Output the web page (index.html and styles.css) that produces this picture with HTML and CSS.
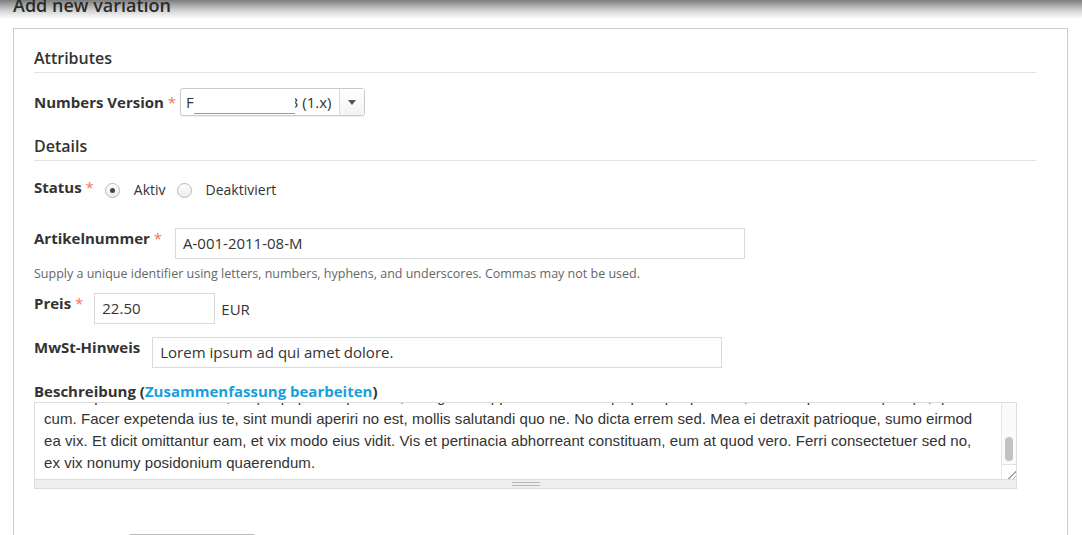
FILE: index.html
```html
<!DOCTYPE html>
<html lang="de">
<head>
    <meta charset="UTF-8">
    <title>Add new variation</title>
    <link rel="stylesheet" href="styles.css">
</head>
<body>
    <div class="page-title">
        <h1>Add new variation</h1>
    </div>

    <div class="panel">
        <h2 class="section-title">Attributes</h2>
        <div class="form-item form-item--center">
            <label class="form-label">Numbers Version <span class="req">*</span></label>
            <div class="select select--version">
                <span class="select-value">F<span class="redact"></span>3 (1.x)</span>
                <span class="select-arrow"></span>
            </div>
        </div>

        <h2 class="section-title section-title--details">Details</h2>
        <div class="form-item form-item--status">
            <label class="form-label">Status <span class="req">*</span></label>
            <div class="radios">
                <span class="radio radio--checked"></span>
                <span class="radio-label">Aktiv</span>
                <span class="radio"></span>
                <span class="radio-label">Deaktiviert</span>
            </div>
        </div>

        <div class="form-item form-item--sku">
            <label class="form-label">Artikelnummer <span class="req">*</span></label>
            <div class="text-input text-input--wide sku-input">A-001-2011-08-M</div>
        </div>
        <div class="description">Supply a unique identifier using letters, numbers, hyphens, and underscores. Commas may not be used.</div>

        <div class="form-item form-item--price">
            <label class="form-label">Preis <span class="req">*</span></label>
            <div class="price-field">
                <div class="text-input text-input--price">22.50</div>
                <span class="currency">EUR</span>
            </div>
        </div>

        <div class="form-item form-item--vat">
            <label class="form-label">MwSt-Hinweis</label>
            <div class="text-input text-input--wide vat-input">Lorem ipsum ad qui amet dolore.</div>
        </div>

        <div class="form-item--body">
            <label class="form-label">Beschreibung (<a href="#" class="summary-link">Zusammenfassung bearbeiten</a>)</label>
            <div class="textarea">
                <div class="textarea-text">
                    <div class="textarea-scroll">
                        Lorem ipsum dolor sit amet, ut quo populo sapientem, sea graeci appetere ei. Pri at qui prompta pertinax, ne sea quando tempor qui, quo<br>
                        cum. Facer expetenda ius te, sint mundi aperiri no est, mollis salutandi quo ne. No dicta errem sed. Mea ei detraxit patrioque, sumo eirmod<br>
                        ea vix. Et dicit omittantur eam, et vix modo eius vidit. Vis et pertinacia abhorreant constituam, eum at quod vero. Ferri consectetuer sed no,<br>
                        ex vix nonumy posidonium quaerendum.
                    </div>
                </div>
                <div class="scrollbar">
                    <div class="scrollbar-track"><span class="scrollbar-thumb"></span></div>
                    <div class="resizer"></div>
                </div>
            </div>
            <div class="grippie"><span></span></div>
        </div>

        <div class="form-actions">
            <span class="button">Speichern</span>
        </div>
    </div>
</body>
</html>
```

FILE: styles.css
```css
html,
body {
    margin: 0;
    padding: 0;
    height: 535px;
    overflow: hidden;
    background-color: #ffffff;
}

body {
    font-family: 'Open Sans', 'DejaVu Sans', sans-serif;
    color: #333333;
}

.page-title {
    display: flow-root;
    height: 28px;
    background: linear-gradient(to bottom, #7c7c7c 0, #cfcfcf 10px, #fbfbfb 18px, #ffffff 19px);
}

.page-title h1 {
    margin: -5px 0 0 13px;
    font-size: 18px;
    line-height: 20px;
    font-weight: 600;
    color: #2b2b2b;
}

.panel {
    margin: 0 14px 0 13px;
    padding: 19px 31px 0 20px;
    border: 1px solid #cccccc;
    border-bottom: none;
    min-height: 600px;
}

.section-title {
    margin: 0;
    font-size: 16px;
    line-height: 20px;
    font-weight: 600;
    padding-bottom: 4px;
    border-bottom: 1px solid #e2e2e2;
}

.section-title--details {
    margin-top: 20px;
}

.form-item {
    display: flex;
    align-items: flex-start;
}

.form-item--center {
    align-items: center;
    margin-top: 15px;
}

.form-label {
    font-size: 15px;
    line-height: 20px;
    font-weight: 700;
    white-space: nowrap;
}

.req {
    color: #ef7a55;
    font-weight: 400;
}

/* select */
.select {
    display: flex;
    align-items: stretch;
    height: 26px;
    border: 1px solid #c9c9c9;
    border-radius: 3px;
    background-color: #ffffff;
    box-shadow: 0 1px 1px rgba(0, 0, 0, 0.06);
}

.select--version {
    margin-left: 4px;
    width: 183px;
}

.select-value {
    flex: 1;
    padding-left: 5px;
    font-size: 15px;
    line-height: 26px;
    white-space: nowrap;
    overflow: hidden;
}

.redact {
    display: inline-block;
    position: relative;
    width: 101px;
    height: 22px;
    margin-right: -5px;
    vertical-align: -6px;
    background-color: #ffffff;
    border-bottom: 1px solid #9a9a9a;
}

.select-arrow {
    width: 24px;
    border-left: 1px solid #dcdcdc;
    background: linear-gradient(to bottom, #ffffff, #f3f3f3);
    display: flex;
    align-items: center;
    justify-content: center;
}

.select-arrow::after {
    content: '';
    border-left: 4px solid transparent;
    border-right: 4px solid transparent;
    border-top: 5px solid #555555;
}

/* radios */
.form-item--status {
    margin-top: 16px;
}

.radios {
    display: flex;
    align-items: center;
    margin-left: 11px;
    padding-top: 3px;
    font-size: 14px;
    line-height: 20px;
}

.radio {
    box-sizing: border-box;
    width: 15px;
    height: 15px;
    border-radius: 50%;
    border: 1px solid #b9b9b9;
    background: linear-gradient(to bottom, #ffffff, #ececec);
    display: flex;
    align-items: center;
    justify-content: center;
}

.radio--checked::after {
    content: '';
    width: 5px;
    height: 5px;
    border-radius: 50%;
    background-color: #444444;
}

.radio-label {
    margin: 0 11px 0 14px;
}

/* text inputs */
.text-input {
    box-sizing: border-box;
    height: 31px;
    border: 1px solid #dadada;
    padding: 0 7px;
    font-size: 15px;
    line-height: 29px;
    background-color: #ffffff;
    white-space: nowrap;
}

.text-input--wide {
    width: 570px;
}

.form-item--sku {
    margin-top: 28px;
}

.sku-input {
    margin-left: 13px;
}

.description {
    margin-top: 7px;
    font-size: 12.5px;
    line-height: 16px;
    color: #666666;
}

.form-item--price {
    margin-top: 11px;
}

.price-field {
    display: flex;
    align-items: center;
    margin-left: 11px;
}

.text-input--price {
    width: 121px;
}

.currency {
    margin-left: 6px;
    font-size: 15px;
}

.form-item--vat {
    margin-top: 13px;
}

.vat-input {
    margin-left: 12px;
}

/* body textarea */
.form-item--body {
    margin-top: 13px;
    width: 983px;
}

.form-item--body .form-label {
    display: block;
    margin-bottom: 1px;
}

.summary-link {
    color: #17a0dc;
    text-decoration: none;
}

.textarea {
    display: flex;
    height: 76px;
    border: 1px solid #dddddd;
    border-bottom: none;
}

.textarea-text {
    flex: 1;
    overflow: hidden;
    padding: 0 9px;
}

.textarea-scroll {
    margin-top: -17px;
    font-family: 'Liberation Sans', Arial, sans-serif;
    font-size: 15px;
    line-height: 22px;
    letter-spacing: 0.05px;
    color: #333333;
    white-space: nowrap;
}

.scrollbar {
    width: 14px;
    display: flex;
    flex-direction: column;
    border-left: 1px solid #e6e6e6;
    background-color: #fafafa;
}

.scrollbar-track {
    flex: 1;
    display: flex;
    justify-content: center;
    padding-top: 34px;
}

.scrollbar-thumb {
    width: 8px;
    height: 24px;
    border-radius: 4px;
    background-color: #c2c2c2;
}

.resizer {
    height: 14px;
    border-top: 1px solid #e2e2e2;
    background:
        linear-gradient(135deg, transparent 14px, #a0a0a0 14px, #a0a0a0 15px, transparent 15px, transparent 17px, #a0a0a0 17px, #a0a0a0 18px, transparent 18px);
    background-color: #ffffff;
}

.grippie {
    height: 8px;
    border: 1px solid #dddddd;
    background-color: #eeeeee;
    display: flex;
    align-items: center;
    justify-content: center;
}

.grippie span {
    width: 28px;
    height: 2px;
    border-top: 1px solid #b8b8b8;
    border-bottom: 1px solid #b8b8b8;
}

.form-actions {
    margin-top: 45px;
    padding-left: 94px;
}

.button {
    display: inline-block;
    width: 126px;
    height: 28px;
    border: 1px solid #bbbbbb;
    border-radius: 3px;
    background: linear-gradient(to bottom, #ffffff, #e8e8e8);
    color: transparent;
}
```
